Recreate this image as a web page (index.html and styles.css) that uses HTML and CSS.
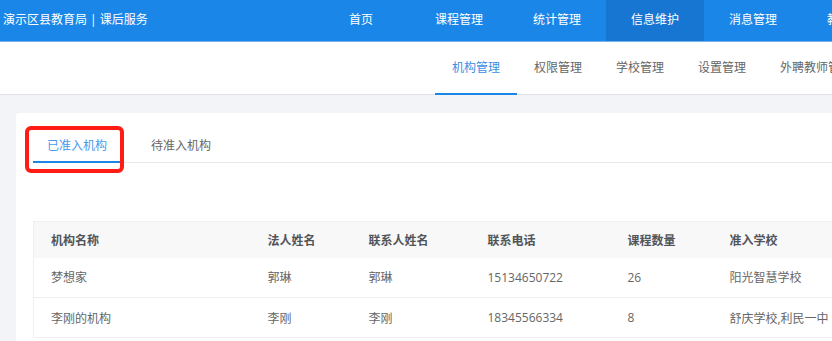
FILE: index.html
```html
<html>
<head>
<meta charset="utf-8">
<title>机构管理</title>
<link rel="stylesheet" href="styles.css">
</head>
<body>
<div class="app">

  <div class="topbar">
    <div class="brand">演示区县教育局 | 课后服务</div>
    <ul class="main-nav">
      <li>首页</li>
      <li>课程管理</li>
      <li>统计管理</li>
      <li class="active">信息维护</li>
      <li>消息管理</li>
      <li>教务管理</li>
    </ul>
  </div>

  <div class="subbar">
    <ul class="sub-nav">
      <li class="active">机构管理</li>
      <li>权限管理</li>
      <li>学校管理</li>
      <li>设置管理</li>
      <li>外聘教师管理</li>
    </ul>
  </div>

  <div class="content">
    <div class="card">
      <div class="mark"></div>

      <div class="tabs">
        <div class="tab active">已准入机构</div>
        <div class="tab">待准入机构</div>
      </div>

      <table class="grid">
        <colgroup>
          <col class="c-name">
          <col class="c-legal">
          <col class="c-contact">
          <col class="c-phone">
          <col class="c-count">
          <col class="c-school">
        </colgroup>
        <thead>
          <tr>
            <th>机构名称</th>
            <th>法人姓名</th>
            <th>联系人姓名</th>
            <th>联系电话</th>
            <th>课程数量</th>
            <th>准入学校</th>
          </tr>
        </thead>
        <tbody>
          <tr>
            <td>梦想家</td>
            <td>郭琳</td>
            <td>郭琳</td>
            <td>15134650722</td>
            <td>26</td>
            <td>阳光智慧学校</td>
          </tr>
          <tr>
            <td>李刚的机构</td>
            <td>李刚</td>
            <td>李刚</td>
            <td>18345566334</td>
            <td>8</td>
            <td>舒庆学校,利民一中</td>
          </tr>
        </tbody>
      </table>
    </div>
  </div>

</div>
</body>
</html>
```

FILE: styles.css
```css
html, body {
  margin: 0;
  overflow: hidden;
}

body {
  background-color: #f3f4f7;
  font-family: "Open Sans", "Noto Sans CJK SC", sans-serif;
  font-size: 12px;
  color: #666;
}

ul {
  list-style: none;
  margin: 0;
  padding: 0;
}

.app {
  width: 1100px;
}

/* top bar */
.topbar {
  display: flex;
  height: 41px;
  background-color: #1a86e8;
  border-bottom: 1px solid #74b4f1;
  color: #fff;
}

.brand {
  width: 309px;
  padding-left: 3px;
  line-height: 39px;
  white-space: nowrap;
}

.main-nav {
  display: flex;
}

.main-nav li {
  width: 98px;
  text-align: center;
  line-height: 39px;
}

.main-nav .active {
  background-color: #1676d2;
}

/* second level */
.subbar {
  height: 52px;
  background-color: #fff;
  border-bottom: 1px solid #dfe2e8;
}

.sub-nav {
  display: flex;
  height: 52px;
  padding-left: 435px;
}

.sub-nav li {
  box-sizing: border-box;
  width: 82px;
  height: 53px;
  padding-left: 17px;
  line-height: 51px;
  white-space: nowrap;
}

.sub-nav .active {
  color: #3a8ee6;
  border-bottom: 2px solid #1a86e8;
}

/* card */
.content {
  padding: 18px 0 0 16px;
}

.card {
  position: relative;
  background-color: #fff;
  border-radius: 3px;
  padding: 12px 0 0 17px;
  height: 300px;
}

.mark {
  position: absolute;
  left: 9px;
  top: 13px;
  width: 99px;
  height: 47px;
  box-sizing: border-box;
  border: 4px solid #ff1c14;
  border-radius: 6px;
}

.tabs {
  display: flex;
  gap: 16px;
  border-bottom: 1px solid #e6e8ec;
}

.tab {
  padding: 6px 14px 0;
  line-height: 30px;
  border-bottom: 2px solid transparent;
  margin-bottom: -1px;
}

.tab.active {
  color: #4a98ee;
  border-bottom-color: #1a86e8;
}

/* table */
.grid {
  margin-top: 58px;
  border-collapse: collapse;
  table-layout: fixed;
  width: 1000px;
  font-size: 12px;
  border-top: 1px solid #eef0f3;
  border-left: 1px solid #eef0f3;
}

.c-name { width: 217px; }
.c-legal { width: 101px; }
.c-contact { width: 119px; }
.c-phone { width: 140px; }
.c-count { width: 102px; }

.grid th,
.grid td {
  text-align: left;
  padding: 0 0 0 17px;
  white-space: nowrap;
}

.grid th {
  height: 36px;
  background-color: #f8f8f9;
  color: #515458;
  font-weight: bold;
}

.grid td {
  height: 40px;
  border-bottom: 1px solid #ebeef3;
  color: #666;
}
```
